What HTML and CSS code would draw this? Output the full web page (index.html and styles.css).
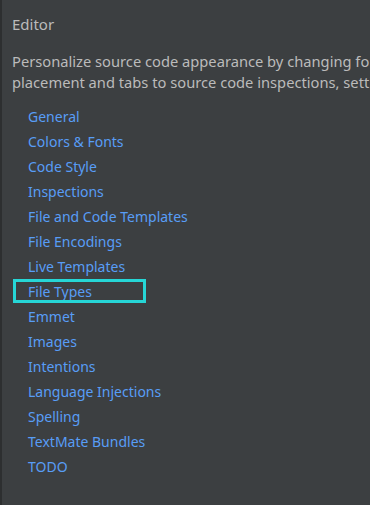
FILE: index.html
```html
<!doctype html>
<html lang="en">
  <head>
    <meta charset="UTF-8" />
    <meta name="viewport" content="width=device-width, initial-scale=1.0" />
    <title>Editor</title>
    <link rel="stylesheet" href="styles.css">
  </head>
  <body>
    <div class="panel">
      <div class="title">Editor</div>
      <p class="intro">
        Personalize source code appearance by changing fonts, highlighting, line
        placement and tabs to source code inspections, settings and templates.
      </p>
      <ul class="links">
        <li><a href="#">General</a></li>
        <li><a href="#">Colors &amp; Fonts</a></li>
        <li><a href="#">Code Style</a></li>
        <li><a href="#">Inspections</a></li>
        <li><a href="#">File and Code Templates</a></li>
        <li><a href="#">File Encodings</a></li>
        <li><a href="#">Live Templates</a></li>
        <li class="marked"><a href="#">File Types</a></li>
        <li><a href="#">Emmet</a></li>
        <li><a href="#">Images</a></li>
        <li><a href="#">Intentions</a></li>
        <li><a href="#">Language Injections</a></li>
        <li><a href="#">Spelling</a></li>
        <li><a href="#">TextMate Bundles</a></li>
        <li><a href="#">TODO</a></li>
      </ul>
    </div>
  </body>
</html>
```

FILE: styles.css
```css
html, body {
  margin: 0;
  height: 100%;
  background: #3c3f41;
}
body {
  font-family: "Noto Sans", "Open Sans", sans-serif;
  font-size: 14px;
  overflow: hidden;
}
.panel {
  height: 100%;
  border-left: 2px solid #2d2f30;
  padding: 14px 0 0 10px;
  box-sizing: border-box;
  overflow: hidden;
}
.title {
  color: #bbbbbb;
  font-size: 15px;
  line-height: 20px;
}
.intro {
  color: #bbbbbb;
  font-size: 14.7px;
  margin: 17px 0 0;
  line-height: 21px;
  width: 550px;
}
.links {
  list-style: none;
  margin: 11px 0 0;
  padding: 0 0 0 16px;
}
.links li {
  height: 25px;
  line-height: 25px;
}
.links a {
  color: #589df6;
  text-decoration: none;
}
.marked {
  position: relative;
}
.marked::before {
  content: "";
  position: absolute;
  left: -15px;
  top: 0;
  width: 127px;
  height: 18px;
  border: 3px solid #26d6d6;
}
```
